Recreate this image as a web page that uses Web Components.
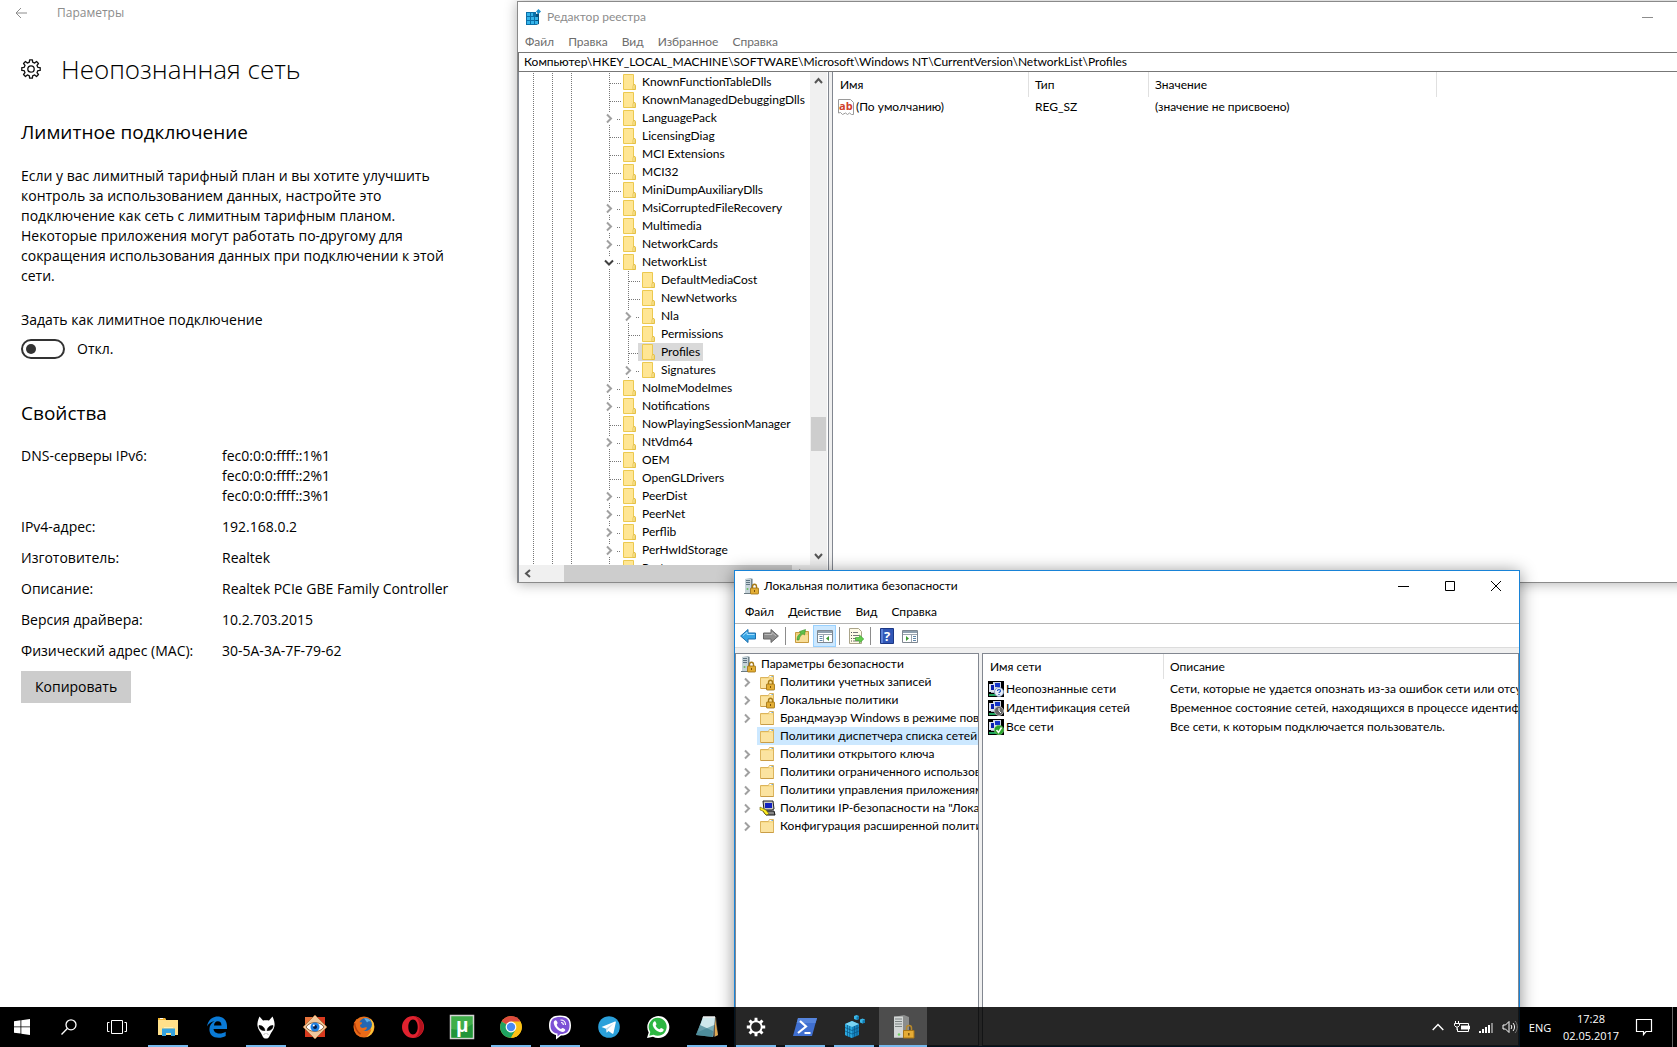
<!DOCTYPE html>
<html lang="ru">
<head>
<meta charset="utf-8">
<title>Рабочий стол</title>
<style>
  html, body{ margin:0; height:100%; }
  body{
    --ui:Lato, "Open Sans", sans-serif;
    --page:"Open Sans", "Noto Sans", sans-serif;
    background:#000;
    color:#000;
    font:12px/18px var(--ui);
    overflow:hidden;
  }
</style>
</head>
<body>
<desk-top>
  <settings-page slot="page"></settings-page>
  <registry-editor slot="windows"></registry-editor>
  <security-policy slot="windows"></security-policy>
  <task-bar slot="bar"></task-bar>
</desk-top>

<script>
/* ---------- icons ---------- */

// cog outline: every tooth is a flat top joined to the rim
function cog(cx, cy, teeth, outer, inner){
  const step = Math.PI * 2 / teeth;
  const pts = [];
  for (let i = 0; i < teeth; i++){
    const a = i * step - Math.PI / 2;
    [[-.30, inner],[-.19, outer],[.19, outer],[.30, inner]].forEach(([o, r]) => {
      pts.push(`${(cx + r * Math.cos(a + o * step)).toFixed(2)} ${(cy + r * Math.sin(a + o * step)).toFixed(2)}`);
    });
  }
  return `M${pts.join("L")}Z`;
}

const FOLDER = `
  <path d="M1.500 3.500h8l1-2h4v13h-13z" fill="#f8dc8c" stroke="#dcb45c"/>
  <path d="M2 5h12v9H2z" fill="#fbe3a0"/>
  <path d="M10.500 2.500h3" stroke="#fff"/><path d="M12.500 2.500h1.500" stroke="#6fa8dc"/>
  <path d="M2 14.500h12.500" stroke="#c99d47"/>`;
const LOCK = `
  <path d="M9.500 10.500V8.500a2 2.200 0 0 1 4 0v2" fill="none" stroke="#a87c18" stroke-width="1.400"/>
  <rect x="7.500" y="10" width="8" height="6" rx=".6" fill="#e3ae35" stroke="#9a6d10" stroke-width=".8"/>
  <path d="M11.500 12v2" stroke="#7a520a"/>`;
const SERVER = `
  <path d="M2 1l6-1 2 1v14l-2 .8H2z" fill="#a9b8c0"/>
  <path d="M2 1h6v14.500H2z" fill="#c6d3d9"/>
  <path d="M3 2.500h4M3 4.500h4M3 6.500h4" stroke="#5e7482"/>
  <path d="M8.500 1v14.500" stroke="#75858d"/>
  <path d="M1 15.500h8" stroke="#6a7a82"/><circle cx="4.500" cy="11" r="1" fill="#6abf62"/>`;
const NET = `
  <path d="M0 0h16v16H0z" fill="#000"/>
  <path d="M5 1h8v7H5z" fill="#cfd6e4"/><path d="M7 2h5v4H7z" fill="#1434c8"/>
  <path d="M1 3h6v8H1z" fill="#dce2ee"/><path d="M3 4h3v5H3z" fill="#0a1fae"/>
  <path d="M1 13h7v2H1z" fill="#1fa35c"/><path d="M3 11h5v1H3z" fill="#aab4c4"/>`;

const ICONS = {
  back:[12,12,`<path d="M12 6H1M6 1L1 6l5 5" fill="none" stroke="#8c8c8c"/>`],
  cog:[20,20,`<g fill="none" stroke="#111" stroke-width="1.300" stroke-linejoin="round"><path d="${cog(10,10,8,9.3,7)}"/><circle cx="10" cy="10" r="3.200"/></g>`],
  regedit:[16,16,`
    <path d="M0 3h10v13H0z" fill="#0b6fa8"/><path d="M10 5l3-1v11l-3 1z" fill="#07527f"/>
    <path d="M1 4h3v3H1zM5 4h2v3H5zM1 8h3v3H1zM5 8h3v3H5zM9 8h3v3H9zM1 12h3v3H1zM5 12h3v3H5zM9 12h3v3H9z" fill="#35b4ea"/>
    <path d="M12.500 0l2.500 2.500L12.500 5 10 2.500z" fill="#1a8fcd"/>`],
  regfolder:[16,16,`
    <path d="M2.500.5h10v10l2 1v4h-12z" fill="#ffe694" stroke="#ecc94f"/>
    <path d="M12.500 10.500h1.500v5h-2v-3z" fill="#fff0b0" stroke="#e0b93a" stroke-width=".8"/>`],
  regvalue:[16,16,`
    <path d="M.5.5h12l3 3v12h-2l-2-1.500-2 1.500-2-1.500-3 1.500-2-2-2 .5z" fill="#fff" stroke="#9a9a9a"/>
    <text x="1" y="10.500" font-family="Open Sans, sans-serif" font-size="11" font-weight="700" fill="#d0402a">ab</text>`],
  secpol:[16,16,`<g>${SERVER}${LOCK}</g>`],
  folder:[16,16,FOLDER],
  lockfolder:[16,16,FOLDER + LOCK],
  ipsec:[16,16,`
    <path d="M4 1h10l1 8-2 1H5z" fill="#c8c8c8" stroke="#222"/><path d="M6 3h7v5H6z" fill="#1222c0"/>
    <path d="M4 11h11l1 4H7z" fill="#888" stroke="#111"/>
    <path d="M1 7l6 3 3 4-3 1-3-4-3-1z" fill="#ffee22" stroke="#6b6200" stroke-width=".6"/>`],
  netunknown:[16,16,`${NET}<circle cx="11" cy="11" r="4.500" fill="#e8eef8" stroke="#8aa0c0"/>
    <path d="M9.500 10c0-2 3-2 3 0 0 1-1.500 1-1.500 2M11 13v1" fill="none" stroke="#1848b8" stroke-width="1.200"/>`],
  netident:[16,16,`${NET}<circle cx="11" cy="11" r="4.500" fill="#666" stroke="#aaa"/>
    <path d="M11 8v3l2 2" fill="none" stroke="#fff"/>`],
  netall:[16,16,`${NET}<circle cx="11" cy="11" r="4.700" fill="#2ba52b" stroke="#7ad07a" stroke-width=".6"/>
    <path d="M8.500 11l2 2.500 3-5" fill="none" stroke="#fff" stroke-width="1.500"/>`],
  left:[16,16,`<path d="M.6 8L8 1.500V5h7.500v6H8v3.500z" fill="#38a5e4" stroke="#1b6fae"/><path d="M3 7.500L7 4v2.500h7.500" fill="none" stroke="#9fdcff"/>`],
  right:[16,16,`<path d="M15.400 8L8 1.500V5H.5v6H8v3.500z" fill="#8d8d8d" stroke="#666"/><path d="M1.500 6.500H9V4.500L13 8" fill="none" stroke="#bbb"/>`],
  up:[16,16,`<path d="M1.500 4.500h5l1-1h7v11h-13z" fill="#f1cf7c" stroke="#c79a3e"/><path d="M2 7h12v7H2z" fill="#f8dd97"/>
    <path d="M3 12c0-4 2-6 4-6.500L5.500 3.500 11.500 1.500 10.500 7 9 5.800c-2 1-3.500 3-4 6.200z" fill="#5fc04a" stroke="#3b8f2c" stroke-width=".6"/>`],
  tree:[16,16,`<path d="M.5 2.500h15v12H.5z" fill="#fff" stroke="#7e8790"/><path d="M1 4h14" stroke="#8fa0ae" stroke-width="2"/>
    <path d="M1 6.500h14M6.500 7v7" stroke="#9aa4ad"/><path d="M2.500 8.500h3M2.500 10.500h3M2.500 12.500h3" stroke="#5f86a8"/>
    <path d="M12 8v5l-3-2.500z" fill="#3c9a30"/>`],
  pane:[16,16,`<path d="M.5 2.500h15v12H.5z" fill="#fff" stroke="#7e8790"/><path d="M1 4h14" stroke="#8fa0ae" stroke-width="2"/>
    <path d="M1 6.500h14M9.500 7v7" stroke="#9aa4ad"/><path d="M11 8.500h3M11 10.500h3M11 12.500h3" stroke="#5f86a8"/>
    <path d="M4 8v5l3-2.500z" fill="#3c9a30"/>`],
  exportlist:[16,16,`<path d="M1.500.5h9l3 3v12h-12z" fill="#fffbe6" stroke="#aaa48a"/>
    <path d="M5 4.500h5M5 7.500h6M5 10.500h3M5 13h6" stroke="#777"/><path d="M3 4.500h1M3 7.500h1M3 10.500h1M3 13h1" stroke="#555"/>
    <path d="M7.500 9.500h4V7l4.300 4-4.300 4v-2.500h-4z" fill="#62cc4c" stroke="#2f9a25" stroke-width=".6"/>`],
  help:[14,16,`<path d="M.5.5h13v15H.5z" fill="#3157b7" stroke="#1c3784"/><path d="M1 1h2v14H1z" fill="#5d82d8"/>
    <text x="4" y="12.500" font-family="Open Sans, sans-serif" font-size="13" font-weight="700" fill="#fff">?</text>`],
  min:[12,12,`<path d="M0 6.500h11" stroke="currentColor"/>`],
  max:[12,12,`<path d="M1.500 1.500h9v9h-9z" fill="none" stroke="currentColor"/>`],
  close:[12,12,`<path d="M1 1l10 10M11 1L1 11" stroke="currentColor"/>`],
  aup:[9,6,`<path d="M1 5l3.500-4L8 5" fill="none" stroke="#555" stroke-width="2"/>`],
  adown:[9,6,`<path d="M1 1l3.500 4L8 1" fill="none" stroke="#555" stroke-width="2"/>`],
  aleft:[6,9,`<path d="M5 1L1 4.500 5 8" fill="none" stroke="#555" stroke-width="2"/>`],
  aright:[6,9,`<path d="M1 1l4 3.500L1 8" fill="none" stroke="#555" stroke-width="2"/>`],

  /* task bar */
  start:[16,16,`<path d="M0 2.200l6.500-.9v6.200H0zM7.300 1.200L16 0v7.500H7.300zM0 8.300h6.500v6.300L0 13.700zM7.300 8.300H16V16l-8.700-1.200z" fill="#fff"/>`],
  search:[16,16,`<g fill="none" stroke="#fff" stroke-width="1.300"><circle cx="10" cy="5.800" r="5"/><path d="M6.300 9.500L.5 15.500"/></g>`],
  views:[20,14,`<g fill="none" stroke="#fff"><path d="M4.500.5h11v13h-11zM2.500 2.500h-2v9h2M17.500 2.500h2v9h-2"/></g>`],
  explorer:[24,24,`<path d="M2 3h7l1 2h12v15H2z" fill="#ffe08a"/><path d="M2 3h7l1 2H2z" fill="#f2b632"/><path d="M4 3.500h3" stroke="#fff"/>
    <path d="M6 21v-7.500h13V21h-4v-3h-5v3z" fill="#35a3e0"/><path d="M8 12.500h9" stroke="#fff1b8"/>`],
  edge:[24,24,`<path d="M2 11.500C3 5 7.500 1.500 12.500 1.500c6 0 9.500 4 9.500 9.500v3H8.500c.3 3 3 4.500 6 4.500 2.300 0 4.500-.7 6.200-1.800v4.200c-2 1.200-4.400 1.800-7 1.800-6 0-9.300-3.500-9.300-8.500 0-3.700 2-6.500 5.200-8C6 6.500 3.500 8.500 2 11.500zM9 10.500h7.500c0-2.700-1.300-4.200-3.700-4.200-2.300 0-3.600 1.800-3.800 4.200z" fill="#0a7ad6"/>`],
  foobar:[24,24,`<path d="M5.500 1.500l3.500 4c1-.5 5-.5 6 0l3.500-4c1.500 3 2.500 7 2 9.500-.6 4-3.500 6-4.500 9-1 3-2.500 3.500-4 3.500s-3-.5-4-3.500c-1-3-3.900-5-4.500-9-.5-2.500.5-6.500 2-9.500z" fill="#fff"/>
    <path d="M5 10.500c3.500 0 5.500 2 6 5-3.500.3-6-1.500-6-5zM19 10.500c-3.500 0-5.500 2-6 5 3.500.3 6-1.500 6-5zM10 19.500l1-1M14 19.500l-1-1" fill="#000" stroke="#000" stroke-width=".6"/>`],
  faststone:[24,24,`<path d="M2 2h20v20H2z" fill="#d93a1e"/><path d="M2 2h10v10H2z" fill="#e8743c"/>
    <path d="M12 0l12 12-12 12L0 12z" fill="#efc79b" stroke="#a8672e" stroke-width=".7"/>
    <path d="M3 12c4-6 14-6 18 0-4 6-14 6-18 0z" fill="#fff" stroke="#7a4a22" stroke-width=".8"/><circle cx="12" cy="12" r="4.500" fill="#1d7fe0"/><circle cx="12" cy="12" r="2" fill="#041c48"/><circle cx="10.800" cy="10.500" r="1" fill="#fff"/>`],
  firefox:[24,24,`<circle cx="12" cy="12" r="10.500" fill="#e8701a"/><path d="M18 3.500A10.500 10.500 0 0 1 14 22c5-3 6-9 4-18.500z" fill="#f9c63a"/>
    <circle cx="13.500" cy="9.500" r="6.500" fill="#2467b3"/><path d="M12 3.500c3-1 6 1 7 3-2-.5-3 0-4 1-1-2-2-3-3-4z" fill="#5fb0e8"/>
    <path d="M2 8c1-2 2-3 3-4 0 1.500.5 2.500 2 3l3 .5c.5 1-1 2-2 2.500 0 2 1 3 3 3 1.500 0 2.500-1 4-.5-.5 2.500-3 4-5.500 3.500 4 2.500 8 1 10-2-1 5-5 8-9 8C5 22 1 17 2 8z" fill="#ea6a18"/><path d="M2.500 8c.5 5 2 8.500 6 11" fill="none" stroke="#b8400c" stroke-width="1.500"/>`],
  opera:[24,24,`<path fill-rule="evenodd" d="M12 1a11 11 0 1 0 0 22 11 11 0 0 0 0-22zm0 3.500c2.800 0 4.700 3.300 4.700 7.500s-1.900 7.500-4.700 7.500-4.700-3.300-4.700-7.500S9.200 4.500 12 4.500z" fill="#e0222f"/><path fill-rule="evenodd" d="M14 1.500c5 1.200 8.500 5.500 8.500 10.500S19 21.500 14 22.500c3-2 4.500-6 4.500-10.500S17 3.500 14 1.500z" fill="#b3121d"/>`],
  utorrent:[24,24,`<path d="M.5.5h23v23H.5z" fill="#3fae49" stroke="#d4d4d4" stroke-width="1.500"/><path d="M1.500 14C8 16 16 14 22.500 9v13.500h-21z" fill="#22953a"/>
    <text x="6" y="17" font-family="Open Sans, sans-serif" font-size="19" font-weight="700" fill="#fff">µ</text>`],
  chrome:[24,24,`<circle cx="12" cy="12" r="10.800" fill="#fbc116"/>
    <path d="M12 12L2.600 6.600A10.800 10.800 0 0 1 21.400 6.600z" fill="#dd4b3e"/><path d="M12 12L2.600 6.600A10.800 10.800 0 0 0 12 22.800l4.500-8z" fill="#1ea362"/>
    <path d="M12 6.600h9.400A10.800 10.800 0 0 1 12 22.800l5-8z" fill="#fbc116"/>
    <circle cx="12" cy="12" r="5.400" fill="#fff"/><circle cx="12" cy="12" r="4.200" fill="#4a8af4"/>`],
  viber:[24,24,`<path d="M12 .5c7 0 11 2.500 11 10s-4 10-10 10L8 24.500v-4.600C3.500 19 1 16 1 10.500 1 3 5 .5 12 .5z" fill="#fff"/>
    <path d="M12 2c6 0 9.500 2 9.500 8.500S18 19 12.500 19L9.500 21.500v-3C5 17.800 2.500 15.500 2.500 10.500 2.500 4 6 2 12 2z" fill="#7d51d6"/>
    <path d="M7 5.500c1-.6 1.500 0 2.500 2 .5 1-.8 1.500-.7 2.200.5 2 2 3.500 4 4.200.8.200 1-1 2-.8 2.500 1.200 3 1.900 2 2.900-1.500 1.600-3 1-5 0-3-1.600-5-4-5.900-7-.4-1.700 0-2.800 1.100-3.500z" fill="#fff"/>
    <path d="M12.500 5c3 0 5 2 5 5M13 7.500c1.500 0 2.400 1 2.400 2.500" fill="none" stroke="#fff" stroke-width="1.100"/>`],
  telegram:[24,24,`<circle cx="12" cy="12" r="10.800" fill="#2ba0da"/><path d="M4.500 12L18 6.500c.8-.2 1 .3.800 1L16.500 18c-.2.900-.8 1-1.500.6L11.500 16l-1.800 1.700-.7-4z" fill="#fff"/><path d="M9 13.500l7.500-5-6 6-.8 3z" fill="#b8d8ea"/>`],
  whatsapp:[24,24,`<path d="M1 23l1.700-5.600A11 11 0 1 1 7 21.700z" fill="#fff"/><path d="M3.300 20.800l1-3.800A9 9 0 1 1 7.500 19.800z" fill="#2db742"/>
    <path d="M8.200 6.500c.7-.5 1.200-.3 1.700 1l.6 1.500c.1.700-1 1.300-.8 1.800.8 1.700 2 2.800 3.700 3.500.7.200 1.200-1.300 1.800-1.200l2 1c.7.400.5 1 .2 1.700-.7 1.400-2.500 1.700-4 1.200-3.500-1.200-5.500-3.500-6.500-6.300-.5-1.700.2-3.400 1.300-4.200z" fill="#fff"/>`],
  notepad:[24,24,`<path d="M7 2h14l2 18-4 2z" fill="#5f5a50"/><path d="M20 4l3 16-3 1.500z" fill="#e0a850"/><path d="M8 2h12l-2 20L1 20z" fill="#79aeb8"/><path d="M8 2h12l-.8 8L3 17z" fill="#cfe8ec"/><path d="M5 10l13 6-.5 6L1 20z" fill="#3c7f8f" opacity=".7"/><path d="M8 2h12" stroke="#eee" stroke-width="1.500"/>`],
  gear:[24,24,`<path fill-rule="evenodd" d="${cog(12,12,8,9.3,6.6)}M12 7.200a4.800 4.800 0 1 0 0 9.600 4.800 4.800 0 0 0 0-9.600z" fill="#fff"/>`],
  powershell:[24,24,`<path d="M5 3h19l-5 18H0z" fill="#3f6fd0"/><path d="M5 3h19l-1.500 5H3.700z" fill="#5685dd"/><path d="M7 6l6 5.500L5 18" fill="none" stroke="#fff" stroke-width="2.200"/><path d="M11.500 18h6" stroke="#fff" stroke-width="2"/>`],
  regcubes:[24,24,`<path d="M3 9l7-3 7 3v11l-7 3-7-3z" fill="#1584bf"/><path d="M3 9l7 3v11l-7-3z" fill="#2aa7dc"/><path d="M3 9l7-3 7 3-7 3z" fill="#7ad4f2"/>
    <path d="M3 12.500l7 3 7-3M3 16l7 3 7-3M5.500 10v11M7.700 11v11M12.500 11v11M15 10v11" fill="none" stroke="#0a5583" stroke-width=".7"/>
    <path d="M12 1l2.500-1L17 1v3l-2.500 1L12 4zM18 4.500l2.500-1 2.500 1v3l-2.500 1-2.500-1z" fill="#3bb6e6"/><path d="M14.500 2v3L17 4V1zM20.500 5.500v3l2.500-1v-3z" fill="#1078ae"/>`],
  secbig:[24,24,`<path d="M3 2l10-2 5 2v19l-5 2H3z" fill="#8b8d8c"/><path d="M3 1.500h9v21H3z" fill="#d3d7d6"/><path d="M4 4h7M4 6.500h7M4 9h7M4 11.500h7" stroke="#7c8482" stroke-width="1.200"/><circle cx="8" cy="19.500" r="1.200" fill="#6fd060"/>
    <path d="M15.500 16v-3a2.500 2.500 0 0 1 5 0v3" fill="none" stroke="#b9892a" stroke-width="1.500"/><path d="M12.500 15.500h10.500V23H12.500z" fill="#e6ac35" stroke="#a87516"/><path d="M17.800 18v2.500" stroke="#7a520a" stroke-width="1.500"/>`],
  chevup:[12,8,`<path d="M.7 7L6 1.500 11.300 7" fill="none" stroke="#fff" stroke-width="1.400"/>`],
  battery:[16,12,`<path d="M7 4.500h7v4H7z" fill="#fff"/><path d="M5.500 2.500h9v8h-11v-3M14.500 5h1v3h-1" fill="none" stroke="#fff"/><path d="M1.500 0v2M4.500 0v2M.5 2.500h5v2l-1.500 1.500H2L.5 4.500zM3 6v3" fill="none" stroke="#fff"/>`],
  signal:[15,12,`<path d="M0 10h2v2H0zM3 8h2v4H3zM6 6h2v6H6zM9 4h2v8H9z" fill="#fff"/><path d="M12 2h2v10h-2z" fill="#888"/>`],
  volume:[16,14,`<path d="M1 5h2.500L7 1.500v11L3.500 9H1z" fill="none" stroke="#fff"/><path d="M9 5c1 1.200 1 2.800 0 4M11 3c2 2.300 2 5.700 0 8" fill="none" stroke="#fff"/><path d="M13 1c3 3.300 3 8.700 0 12" fill="none" stroke="#777"/>`],
  notes:[16,16,`<path d="M.5.5h15v12H10L7.500 15.500V12.500H.5z" fill="none" stroke="#fff" stroke-width="1.200"/>`]
};

class UiIcon extends HTMLElement {
  constructor(){
    super();
    this.attachShadow({ mode:"open" });
  }

  connectedCallback(){
    const [w, h, art] = ICONS[this.getAttribute("name")];
    this.shadowRoot.innerHTML = `
      <style>
        :host{ display:block; flex:none; }
        svg{ display:block; overflow:visible; }
      </style>
      <svg width="${w}" height="${h}" viewBox="0 0 ${w} ${h}" aria-hidden="true">${art}</svg>
    `;
  }
}

/* ---------- desktop ---------- */

class DeskTop extends HTMLElement {
  constructor(){
    super();
    this.attachShadow({ mode:"open" }).innerHTML = `
      <style>
        :host{
          display:grid;
          grid-template-rows:minmax(0,1fr) 40px;
          position:relative;
          height:100vh;
          overflow:hidden;
          background:#000;
        }
        ::slotted([slot=bar]){ position:relative; z-index:2; }
      </style>
      <slot name="page"></slot>
      <slot name="bar"></slot>
      <slot name="windows"></slot>
    `;
  }
}

/* ---------- settings ---------- */

class SettingsPage extends HTMLElement {
  constructor(){
    super();
    this.attachShadow({ mode:"open" });
  }

  connectedCallback(){
    const props = [
      ["DNS-серверы IPv6:", "fec0:0:0:ffff::1%1<br>fec0:0:0:ffff::2%1<br>fec0:0:0:ffff::3%1"],
      ["IPv4-адрес:", "192.168.0.2"],
      ["Изготовитель:", "Realtek"],
      ["Описание:", "Realtek PCIe GBE Family Controller"],
      ["Версия драйвера:", "10.2.703.2015"],
      ["Физический адрес (MAC):", "30-5A-3A-7F-79-62"]
    ];

    this.shadowRoot.innerHTML = `
      <style>
        :host{
          display:block;
          background:#fff;
          font:14px/20px var(--page);
          overflow:hidden;
        }
        header{
          display:flex;
          align-items:center;
          gap:30px;
          height:25px;
          padding-left:15px;
          font-size:12px;
          color:#8c8c8c;
        }
        .back{ border:0; padding:0; background:none; }
        main{ padding:26px 21px 0; }
        h1{
          display:flex;
          align-items:center;
          gap:20px;
          margin:0;
          font-size:26px;
          line-height:36px;
          font-weight:300;
        }
        h2{
          margin:0;
          font-size:19px;
          line-height:26px;
          font-weight:400;
        }
        h1 + h2{ margin-top:32px; }
        p{ margin:21px 0 24px; max-width:440px; }
        .switch{
          display:flex;
          align-items:center;
          gap:12px;
          margin:9px 0 41px;
        }
        .switch input{
          appearance:none;
          position:relative;
          box-sizing:border-box;
          width:44px;
          height:20px;
          margin:0;
          border:2px solid #333;
          border-radius:10px;
        }
        .switch input::before{
          content:"";
          position:absolute;
          left:3px;
          top:3px;
          width:10px;
          height:10px;
          border-radius:50%;
          background:#333;
        }
        .switch input:checked::before{ left:27px; }
        table{ margin-top:20px; border-collapse:collapse; }
        th, td{
          padding:0 0 11px;
          text-align:left;
          vertical-align:top;
          font-weight:400;
        }
        th{ width:201px; }
        .copy{
          display:block;
          height:32px;
          margin:-1px 0 0;
          padding:0 14px;
          border:0;
          background:#ccc;
          font:inherit;
        }
      </style>
      <header>
        <button class="back" aria-label="Назад"><ui-icon name="back"></ui-icon></button>
        <span>Параметры</span>
      </header>
      <main>
        <h1><ui-icon name="cog"></ui-icon>Неопознанная сеть</h1>
        <h2>Лимитное подключение</h2>
        <p>Если у вас лимитный тарифный план и вы хотите улучшить контроль за использованием данных, настройте это подключение как сеть с лимитным тарифным планом. Некоторые приложения могут работать по-другому для сокращения использования данных при подключении к этой сети.</p>
        <label for="metered">Задать как лимитное подключение</label>
        <div class="switch">
          <input type="checkbox" role="switch" id="metered">
          <span>Откл.</span>
        </div>
        <h2>Свойства</h2>
        <table>
          ${props.map(([k, v]) => `<tr><th scope="row">${k}</th><td>${v}</td></tr>`).join("")}
        </table>
        <button class="copy">Копировать</button>
      </main>
    `;
  }
}

/* ---------- window frame ---------- */

class AppWindow extends HTMLElement {
  constructor(){
    super();
    this.attachShadow({ mode:"open" });
  }

  connectedCallback(){
    const menu = this.getAttribute("menu").split(",");
    this.shadowRoot.innerHTML = `
      <style>
        :host{
          display:flex;
          flex-direction:column;
          box-sizing:border-box;
          height:100%;
          border:1px solid #1883d7;
          background:#fff;
          box-shadow:0 2px 16px rgba(0,0,0,.45);
          --title:#000;
          --menu:#000;
        }
        :host([inactive]){
          border-color:#8a8a8a;
          box-shadow:0 1px 12px rgba(0,0,0,.3);
          --title:#8c8c8c;
          --menu:#6d6d6d;
        }
        .title{
          display:flex;
          align-items:center;
          height:30px;
          padding-left:8px;
          color:var(--title);
        }
        .title ui-icon{ margin-right:5px; }
        .controls{ display:flex; margin-left:auto; }
        .controls button{
          display:grid;
          place-items:center;
          width:46px;
          height:28px;
          padding:0 0 0 4px;
          border:0;
          background:none;
          color:inherit;
        }
        nav{ display:flex; height:22px; padding-left:3px; }
        :host([inactive]) nav{ height:20px; padding-left:0; }
        nav button{
          padding:0 7px;
          border:0;
          background:none;
          color:var(--menu);
          font:inherit;
        }
      </style>
      <div class="title">
        <ui-icon name="${this.getAttribute("icon")}"></ui-icon>
        <span>${this.getAttribute("caption")}</span>
        <div class="controls">
          <button aria-label="Свернуть"><ui-icon name="min"></ui-icon></button>
          <button aria-label="Развернуть"><ui-icon name="max"></ui-icon></button>
          <button aria-label="Закрыть"><ui-icon name="close"></ui-icon></button>
        </div>
      </div>
      <nav>${menu.map(m => `<button>${m}</button>`).join("")}</nav>
      <slot></slot>
    `;
  }
}

/* ---------- tree ---------- */

// guides: one character per indent column, "|" draws a dotted line
class TreeRow extends HTMLElement {
  constructor(){
    super();
    this.attachShadow({ mode:"open" });
  }

  connectedCallback(){
    const guides = [...(this.getAttribute("guides") ?? "")];
    const state = this.getAttribute("state");
    const arrow = {
      closed:`<path d="M7 5.500l4 4-4 4" fill="none" stroke="#a0a0a0" stroke-width="2"/>`,
      open:`<path d="M5 7.500l4 4 4-4" fill="none" stroke="#404040" stroke-width="2"/>`
    }[state] ?? "";
    const dots = `stroke="#777" stroke-dasharray="1 1"`;
    const lined = this.hasAttribute("lined");
    let lines = "";
    if (lined){
      lines = arrow
        ? `<path d="M9.500 0v3M9.500 16v2M17 10.500h4" ${dots}/>`
        : `<path d="M9.500 0v18M10 10.500h11" ${dots}/>`;
    }

    this.setAttribute("role", "treeitem");
    this.shadowRoot.innerHTML = `
      <style>
        :host{ display:flex; height:18px; flex:none; white-space:nowrap; }
        svg{ display:block; flex:none; overflow:visible; }
        .label{
          display:flex;
          flex:none;
          align-items:center;
          gap:5px;
          padding:0 3px 0 2px;
        }
        :host([selected]) .label{ background:var(--selection, #cce8ff); }
      </style>
      ${guides.map(g => `<svg width="19" height="18">${g === "|" ? `<path d="M9.500 0v18" ${dots}/>` : ""}</svg>`).join("")}
      ${state === "root" ? "" : `<svg width="19" height="18">${lines}${arrow}</svg>`}
      <span class="label"><ui-icon name="${this.getAttribute("icon")}"></ui-icon><slot></slot></span>
    `;
  }
}

/* ---------- details list ---------- */

class DetailList extends HTMLElement {
  constructor(){
    super();
    this.attachShadow({ mode:"open" });
  }

  show(columns, rows){
    this.shadowRoot.innerHTML = `
      <style>
        :host{ display:block; overflow:hidden; background:#fff; }
        table{
          width:100%;
          table-layout:fixed;
          border-collapse:separate;
          border-spacing:0;
          white-space:nowrap;
        }
        th, td{
          overflow:hidden;
          padding:0 0 0 7px;
          text-align:left;
          font-weight:400;
        }
        th{ height:25px; }
        th + th{ border-left:1px solid #e0e0e0; padding-left:6px; }
        td{ height:19px; }
        td:first-child{ padding-left:5px; }
        .name{ display:flex; align-items:center; gap:2px; }
      </style>
      <table>
        <colgroup>${columns.map(c => `<col${c[1] ? ` style="width:${c[1]}px"` : ""}>`).join("")}</colgroup>
        <thead><tr>${columns.map(c => `<th scope="col">${c[0]}</th>`).join("")}</tr></thead>
        <tbody>
          ${rows.map(([icon, name, ...rest]) => `
            <tr>
              <td><span class="name"><ui-icon name="${icon}"></ui-icon>${name}</span></td>
              ${rest.map(v => `<td>${v}</td>`).join("")}
            </tr>
          `).join("")}
        </tbody>
      </table>
    `;
  }
}

/* ---------- registry editor ---------- */

class RegistryEditor extends HTMLElement {
  constructor(){
    super();
    this.attachShadow({ mode:"open" });
  }

  connectedCallback(){
    // "+" has children, "-" is open, a leading ">" is one level deeper
    const keys = `KnownFunctionTableDlls
KnownManagedDebuggingDlls
+LanguagePack
LicensingDiag
MCI Extensions
MCI32
MiniDumpAuxiliaryDlls
+MsiCorruptedFileRecovery
+Multimedia
+NetworkCards
-NetworkList
>DefaultMediaCost
>NewNetworks
>+Nla
>Permissions
>Profiles
>+Signatures
+NoImeModeImes
+Notifications
NowPlayingSessionManager
+NtVdm64
OEM
OpenGLDrivers
+PeerDist
+PeerNet
+Perflib
+PerHwIdStorage
Ports`.split("\n");

    const rows = keys.map(k => {
      const deep = k.startsWith(">");
      const rest = deep ? k.slice(1) : k;
      const state = { "+":"closed", "-":"open" }[rest[0]] ?? "leaf";
      const name = rest.replace(/^[+-]/, "");
      return `<tree-row lined icon="regfolder" guides="||| ${deep ? "|" : ""}" state="${state}"${name === "Profiles" ? " selected" : ""}>${name}</tree-row>`;
    }).join("");

    this.shadowRoot.innerHTML = `
      <style>
        :host{
          display:block;
          position:absolute;
          left:517px;
          right:-87px;
          top:1px;
          height:582px;
        }
        input{
          box-sizing:border-box;
          height:20px;
          margin:0;
          padding:0 5px 2px;
          border:1px solid #777;
          background:#fff;
          color:#000;
          font:inherit;
        }
        .panes{
          display:grid;
          grid-template:minmax(0,1fr) / 311px minmax(0,1fr);
          gap:3px;
          flex:1;
          min-height:0;
          background:#f0f0f0;
        }
        .keys{
          display:grid;
          grid-template:minmax(0,1fr) 17px / minmax(0,1fr) 17px;
          padding-right:1px;
          border:solid #828790;
          border-width:0 1px;
          background:#fff;
        }
        .tree{
          display:flex;
          flex-direction:column;
          overflow:hidden;
          padding:1px 0 0 5px;
          --selection:#d9d9d9;
        }
        .bar{
          display:flex;
          align-items:center;
          background:#f0f0f0;
        }
        .bar i{ background:#cdcdcd; }
        .bar ui-icon{ margin:6px; }
        .v{ flex-direction:column; }
        .v i{ width:15px; height:34px; margin-top:auto; }
        .v ui-icon:last-child{ margin-top:102px; }
        .h{ gap:27px; }
        .h i{ flex:1; height:100%; }
        .h ui-icon:last-child{ margin-left:-21px; }
        .corner{ background:#f0f0f0; }
        detail-list{ border-left:1px solid #828790; }
      </style>
      <app-window inactive icon="regedit" caption="Редактор реестра" menu="Файл,Правка,Вид,Избранное,Справка">
        <input aria-label="Путь" value="Компьютер\\HKEY_LOCAL_MACHINE\\SOFTWARE\\Microsoft\\Windows NT\\CurrentVersion\\NetworkList\\Profiles">
        <div class="panes">
          <div class="keys">
            <div class="tree" role="tree">${rows}</div>
            <div class="bar v"><ui-icon name="aup"></ui-icon><i></i><ui-icon name="adown"></ui-icon></div>
            <div class="bar h"><ui-icon name="aleft"></ui-icon><i></i><ui-icon name="aright"></ui-icon></div>
            <div class="corner"></div>
          </div>
          <detail-list></detail-list>
        </div>
      </app-window>
    `;

    this.shadowRoot.querySelector("detail-list").show(
      [["Имя", 195], ["Тип", 120], ["Значение", 288], ["", 0]],
      [["regvalue", "(По умолчанию)", "REG_SZ", "(значение не присвоено)", ""]]
    );
  }
}

/* ---------- local security policy ---------- */

class SecurityPolicy extends HTMLElement {
  constructor(){
    super();
    this.attachShadow({ mode:"open" });
  }

  connectedCallback(){
    this.shadowRoot.innerHTML = `
      <style>
        :host{
          display:block;
          position:absolute;
          left:734px;
          top:570px;
          bottom:0;
          width:786px;
          z-index:1;
        }
        .tools{
          display:flex;
          align-items:center;
          height:23px;
          padding-left:1px;
          border:solid #b4b4b4;
          border-width:1px 0;
          border-bottom-color:#dcdcdc;
        }
        .tools button{
          display:grid;
          place-items:center;
          width:23px;
          height:22px;
          padding:0;
          border:0;
          background:none;
        }
        .tools button.on{ background:#cce8ff; box-shadow:inset 0 0 0 1px #99d1ff; }
        .tools i{ width:1px; height:18px; margin:0 4px 0 3px; background:#8c8c8c; }
        .panes{
          display:grid;
          grid-template:minmax(0,1fr) / 244px minmax(0,1fr);
          gap:3px;
          flex:1;
          min-height:0;
          padding-top:5px;
          background:#f0f0f0;
        }
        .tree, detail-list{ border:1px solid #828790; background:#fff; }
        .tree{ overflow:hidden; padding:1px 1px 0 2px; }
      </style>
      <app-window icon="secpol" caption="Локальная политика безопасности" menu="Файл,Действие,Вид,Справка">
        <div class="tools">
          <button aria-label="Назад"><ui-icon name="left"></ui-icon></button>
          <button aria-label="Вперед"><ui-icon name="right"></ui-icon></button>
          <i></i>
          <button aria-label="Вверх"><ui-icon name="up"></ui-icon></button>
          <button class="on" aria-label="Дерево консоли"><ui-icon name="tree"></ui-icon></button>
          <i></i>
          <button aria-label="Экспорт списка"><ui-icon name="exportlist"></ui-icon></button>
          <i></i>
          <button aria-label="Справка"><ui-icon name="help"></ui-icon></button>
          <button aria-label="Панель действий"><ui-icon name="pane"></ui-icon></button>
        </div>
        <div class="panes">
          <div class="tree" role="tree">
            <tree-row state="root" icon="secpol">Параметры безопасности</tree-row>
            <tree-row state="closed" icon="lockfolder">Политики учетных записей</tree-row>
            <tree-row state="closed" icon="lockfolder">Локальные политики</tree-row>
            <tree-row state="closed" icon="folder">Брандмауэр Windows в режиме повышенной безопасности</tree-row>
            <tree-row state="leaf" icon="folder" selected>Политики диспетчера списка сетей</tree-row>
            <tree-row state="closed" icon="folder">Политики открытого ключа</tree-row>
            <tree-row state="closed" icon="folder">Политики ограниченного использования программ</tree-row>
            <tree-row state="closed" icon="folder">Политики управления приложениями</tree-row>
            <tree-row state="closed" icon="ipsec">Политики IP-безопасности на "Локальный компьютер"</tree-row>
            <tree-row state="closed" icon="folder">Конфигурация расширенной политики аудита</tree-row>
          </div>
          <detail-list></detail-list>
        </div>
      </app-window>
    `;

    this.shadowRoot.querySelector("detail-list").show(
      [["Имя сети", 180], ["Описание", 0]],
      [
        ["netunknown", "Неопознанные сети", "Сети, которые не удается опознать из-за ошибок сети или отсутствия данных."],
        ["netident", "Идентификация сетей", "Временное состояние сетей, находящихся в процессе идентификации."],
        ["netall", "Все сети", "Все сети, к которым подключается пользователь."]
      ]
    );
  }
}

/* ---------- task bar ---------- */

class TaskBar extends HTMLElement {
  constructor(){
    super();
    this.attachShadow({ mode:"open" });
  }

  connectedCallback(){
    const apps = [
      ["explorer", "Проводник", "run"], ["edge", "Edge", ""], ["foobar", "foobar2000", "run"],
      ["faststone", "FastStone", ""], ["firefox", "Firefox", ""], ["opera", "Opera", ""],
      ["utorrent", "µTorrent", ""], ["chrome", "Chrome", "run"], ["viber", "Viber", "run"],
      ["telegram", "Telegram", ""], ["whatsapp", "WhatsApp", ""], ["notepad", "Блокнот", "run"],
      ["gear", "Параметры", "run"], ["powershell", "PowerShell", "run"],
      ["regcubes", "Редактор реестра", "run"], ["secbig", "Локальная политика безопасности", "run active"]
    ];
    const tray = [["chevup", "Скрытые значки"], ["battery", "Батарея"], ["signal", "Сеть"], ["volume", "Громкость"]];

    this.shadowRoot.innerHTML = `
      <style>
        :host{
          display:flex;
          background:rgba(0,0,0,.85);
          color:#fff;
          font:11px/17px var(--page);
        }
        button{
          display:grid;
          place-items:center;
          position:relative;
          padding:0;
          border:0;
          background:none;
          color:inherit;
          font:inherit;
        }
        .system, .apps, .tray{ display:flex; }
        .system button{ width:48px; }
        .system button:first-child{ width:45px; padding-right:2px; }
        .apps{ gap:1px; margin-left:3px; }
        .apps button{ width:48px; }
        .run::after{
          content:"";
          position:absolute;
          left:4px;
          right:4px;
          bottom:0;
          height:2px;
          background:#76b9ed;
        }
        .active{ background:rgba(255,255,255,.18); }
        .active::after{ left:0; right:0; }
        .tray{ margin-left:auto; }
        .tray button{ width:24px; }
        .tray .lang{ width:36px; }
        .tray .clock{ width:66px; align-content:center; }
        .tray .notes{ width:40px; margin-right:8px; }
        .tray .show{ width:5px; border-left:1px solid #666; }
      </style>
      <div class="system">
        <button aria-label="Пуск"><ui-icon name="start"></ui-icon></button>
        <button aria-label="Поиск"><ui-icon name="search"></ui-icon></button>
        <button aria-label="Представление задач"><ui-icon name="views"></ui-icon></button>
      </div>
      <div class="apps">
        ${apps.map(([icon, name, state]) => `<button class="${state}" aria-label="${name}"><ui-icon name="${icon}"></ui-icon></button>`).join("")}
      </div>
      <div class="tray">
        ${tray.map(([icon, name]) => `<button aria-label="${name}"><ui-icon name="${icon}"></ui-icon></button>`).join("")}
        <button class="lang">ENG</button>
        <button class="clock"><span>17:28</span><span>02.05.2017</span></button>
        <button class="notes" aria-label="Уведомления"><ui-icon name="notes"></ui-icon></button>
        <button class="show" aria-label="Свернуть все окна"></button>
      </div>
    `;
  }
}

customElements.define("ui-icon", UiIcon);
customElements.define("tree-row", TreeRow);
customElements.define("detail-list", DetailList);
customElements.define("app-window", AppWindow);
customElements.define("settings-page", SettingsPage);
customElements.define("registry-editor", RegistryEditor);
customElements.define("security-policy", SecurityPolicy);
customElements.define("task-bar", TaskBar);
customElements.define("desk-top", DeskTop);
</script>
</body>
</html>
